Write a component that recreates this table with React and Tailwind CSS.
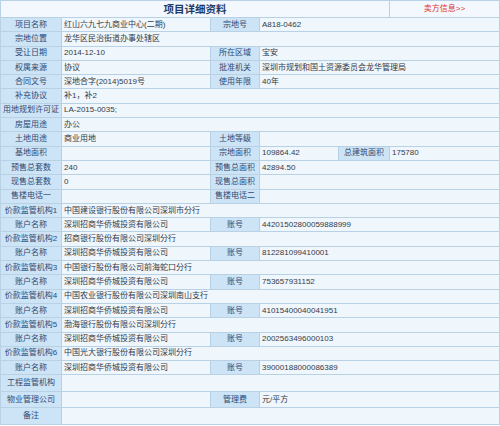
import React from 'react';

const L = (t, span = 1) => ({ t, kind: 'label', span });
const V = (t, span = 1) => ({ t, kind: 'value', span });

const banks = [
  ['中国建设银行股份有限公司深圳市分行', '44201502800059888999'],
  ['招商银行股份有限公司深圳分行', '812281099410001'],
  ['中国银行股份有限公司前海蛇口分行', '753657931152'],
  ['中国农业银行股份有限公司深圳南山支行', '41015400040041951'],
  ['渤海银行股份有限公司深圳分行', '2002563496000103'],
  ['中国光大银行股份有限公司深圳分行', '39000188000086389'],
];

const rows = [
  [L('项目名称'), V('红山六九七九商业中心(二期)'), L('宗地号'), V('A818-0462', 3)],
  [L('宗地位置'), V('龙华区民治街道办事处辖区', 5)],
  [L('受让日期'), V('2014-12-10'), L('所在区域'), V('宝安', 3)],
  [L('权属来源'), V('协议'), L('批准机关'), V('深圳市规划和国土资源委员会龙华管理局', 3)],
  [L('合同文号'), V('深地合字(2014)5019号'), L('使用年限'), V('40年', 3)],
  [L('补充协议'), V('补1，补2', 5)],
  [L('用地规划许可证'), V('LA-2015-0035;', 5)],
  [L('房屋用途'), V('办公', 5)],
  [L('土地用途'), V('商业用地'), L('土地等级'), V('', 3)],
  [L('基地面积'), V(''), L('宗地面积'), V('109864.42'), L('总建筑面积'), V('175780')],
  [L('预售总套数'), V('240'), L('预售总面积'), V('42894.50', 3)],
  [L('现售总套数'), V('0'), L('现售总面积'), V('', 3)],
  [L('售楼电话一'), V(''), L('售楼电话二'), V('', 3)],
  ...banks.flatMap(([bank, acct], i) => [
    [L(`价款监管机构${i + 1}`), V(bank, 5)],
    [L('账户名称'), V('深圳招商华侨城投资有限公司'), L('账号'), V(acct, 3)],
  ]),
  [L('工程监管机构'), V('', 5)],
  [L('物业管理公司'), V(''), L('管理费'), V('元/平方', 3)],
  [L('备注'), V('', 5)],
];

const spanClass = {
  1: 'col-span-1',
  3: 'col-span-3',
  5: 'col-span-5',
};

function Cell({ cell }) {
  if (cell.kind === 'label') {
    return (
      <div className={`${spanClass[cell.span]} bg-[#cde3f6] text-[#2f4a72] flex items-center justify-center whitespace-nowrap overflow-hidden`}>
        {cell.t}
      </div>
    );
  }
  return (
    <div className={`${spanClass[cell.span]} bg-[#eff6fc] text-[#333b48] flex items-center pl-[2px] whitespace-nowrap overflow-hidden`}>
      {cell.t}
    </div>
  );
}

export default function App() {
  return (
    <div
      className="w-[500px] h-[426px] bg-white overflow-hidden"
      style={{ fontFamily: '"Liberation Sans", "Noto Sans CJK SC", sans-serif' }}
    >
      <div className="grid grid-cols-[60px_148px_48px_78px_50px_1fr] grid-rows-[16px_repeat(25,13.3px)_repeat(3,15.5px)] gap-px p-px bg-[#b9d1e5] text-[8px] leading-none">
        <div className="col-span-5 bg-[#f2f8fd] flex items-center justify-center text-[10.5px] font-bold text-[#1f3a66]">
          项目详细资料
        </div>
        <div className="bg-[#f2f8fd] flex items-center justify-center text-[#e0342c]">
          卖方信息&gt;&gt;
        </div>
        {rows.map((row, ri) =>
          row.map((cell, ci) => <Cell key={`${ri}-${ci}`} cell={cell} />)
        )}
      </div>
    </div>
  );
}
